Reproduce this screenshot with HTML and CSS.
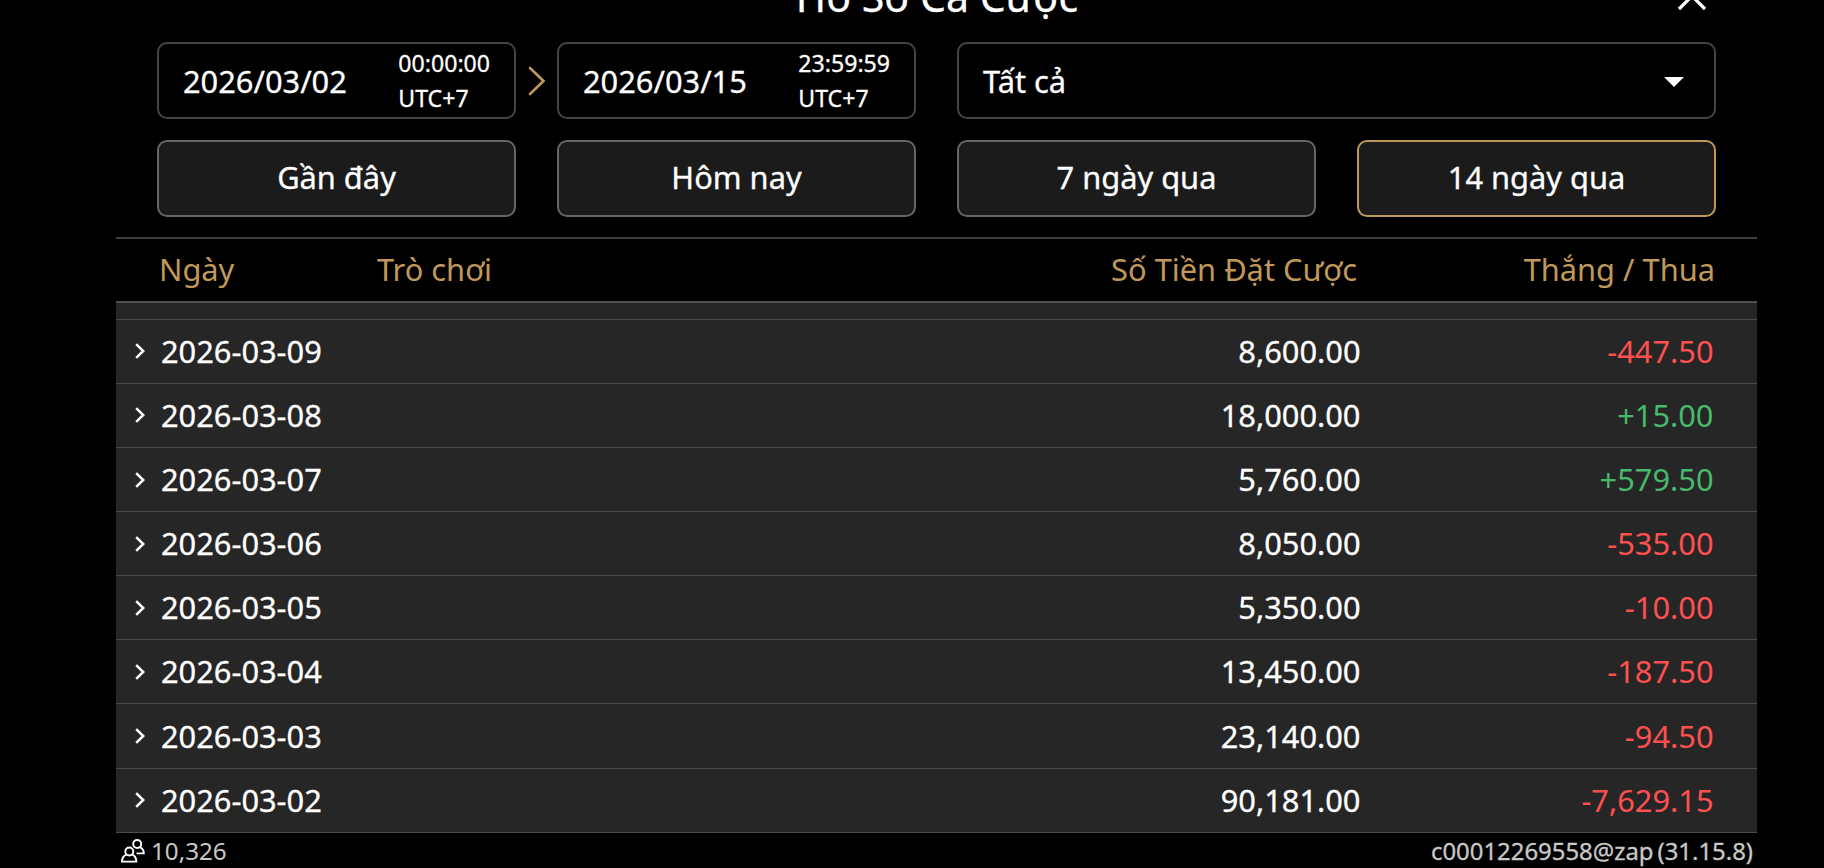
FILE: index.html
```
<!DOCTYPE html>
<html lang="vi">
<head>
    <meta charset="UTF-8">
    <meta name="viewport" content="width=device-width, initial-scale=1.0">
    <title>Hồ Sơ Cá Cược</title>
    <link rel="stylesheet" href="styles.css">
</head>
<body>

    <div class="panel">
        <header class="title-bar">
            <h1>Hồ Sơ Cá Cược</h1>
            <svg class="close" viewBox="0 0 30 30"><path d="M2 2 L28 28 M28 2 L2 28"/></svg>
        </header>

        <section class="filters">
            <div class="field date">
                <span>2026/03/02</span>
                <div class="time"><span>00:00:00</span><span>UTC+7</span></div>
                <svg class="range-arrow" viewBox="0 0 18 30"><path d="M2 2 L15.5 15 L2 28"/></svg>
            </div>
            <div class="field date">
                <span>2026/03/15</span>
                <div class="time"><span>23:59:59</span><span>UTC+7</span></div>
            </div>
            <div class="field select">
                <span>Tất cả</span>
                <svg class="caret" viewBox="0 0 20 10"><path d="M0 0 H20 L10 10 Z"/></svg>
            </div>
            <button>Gần đây</button>
            <button>Hôm nay</button>
            <button>7 ngày qua</button>
            <button class="active">14 ngày qua</button>
        </section>

        <div class="table-head">
            <span>Ngày</span>
            <span>Trò chơi</span>
            <span class="num">Số Tiền Đặt Cược</span>
            <span class="num">Thắng / Thua</span>
        </div>

        <main class="rows">
            <div class="row-end"></div>
            <div class="row">
                <svg class="chevron" viewBox="0 0 10 16"><path d="M1.2 1.2 L8.2 8 L1.2 14.8"/></svg>
                <span>2026-03-09</span><span class="num">8,600.00</span><span class="num loss">-447.50</span>
            </div>
            <div class="row">
                <svg class="chevron" viewBox="0 0 10 16"><path d="M1.2 1.2 L8.2 8 L1.2 14.8"/></svg>
                <span>2026-03-08</span><span class="num">18,000.00</span><span class="num win">+15.00</span>
            </div>
            <div class="row">
                <svg class="chevron" viewBox="0 0 10 16"><path d="M1.2 1.2 L8.2 8 L1.2 14.8"/></svg>
                <span>2026-03-07</span><span class="num">5,760.00</span><span class="num win">+579.50</span>
            </div>
            <div class="row">
                <svg class="chevron" viewBox="0 0 10 16"><path d="M1.2 1.2 L8.2 8 L1.2 14.8"/></svg>
                <span>2026-03-06</span><span class="num">8,050.00</span><span class="num loss">-535.00</span>
            </div>
            <div class="row">
                <svg class="chevron" viewBox="0 0 10 16"><path d="M1.2 1.2 L8.2 8 L1.2 14.8"/></svg>
                <span>2026-03-05</span><span class="num">5,350.00</span><span class="num loss">-10.00</span>
            </div>
            <div class="row">
                <svg class="chevron" viewBox="0 0 10 16"><path d="M1.2 1.2 L8.2 8 L1.2 14.8"/></svg>
                <span>2026-03-04</span><span class="num">13,450.00</span><span class="num loss">-187.50</span>
            </div>
            <div class="row">
                <svg class="chevron" viewBox="0 0 10 16"><path d="M1.2 1.2 L8.2 8 L1.2 14.8"/></svg>
                <span>2026-03-03</span><span class="num">23,140.00</span><span class="num loss">-94.50</span>
            </div>
            <div class="row">
                <svg class="chevron" viewBox="0 0 10 16"><path d="M1.2 1.2 L8.2 8 L1.2 14.8"/></svg>
                <span>2026-03-02</span><span class="num">90,181.00</span><span class="num loss">-7,629.15</span>
            </div>
        </main>

        <footer>
            <svg class="users" viewBox="0 0 24 24">
                <circle cx="8.3" cy="12.5" r="4"/>
                <path d="M5.6 15.6 C2.5 16.6 1 18.6 1 22.6 H15.3 C15.3 18.6 14 16.6 11 15.6"/>
                <circle cx="16.2" cy="5" r="4"/>
                <path d="M18.8 8.3 C21.5 9.2 22.8 11 22.8 14.4 H15.5"/>
            </svg>
            <span>10,326</span>
            <span class="account">c00012269558@zap</span>
            <span class="version">(31.15.8)</span>
        </footer>
    </div>

</body>
</html>
```

FILE: styles.css
```
* {
    box-sizing: border-box;
}

body {
    margin: 0;
    height: 868px;
    overflow: hidden;
    background-color: #000;
    color: #fff;
    font-family: 'Noto Sans', sans-serif;
    font-size: 30.8px;
    line-height: 42px;
    -webkit-text-stroke: 0.3px;
}

svg {
    flex: none;
    fill: none;
    stroke: #fff;
}

.panel {
    width: 1641px;
    margin-left: 116px;
}

/* the title is partly scrolled out of the window */
.title-bar {
    display: flex;
    align-items: center;
    height: 84px;
    margin-top: -42px;
    padding-right: 50px;
}

h1 {
    flex: 1;
    margin: 0 0 9px 81px;
    font-size: 41px;
    font-weight: 400;
    text-align: center;
}

.close {
    width: 30px;
    height: 30px;
    margin-bottom: 9px;
    stroke-width: 3.2;
}

.filters {
    display: grid;
    grid-template-columns: repeat(4, 359px);
    grid-auto-rows: 77px;
    gap: 21px 41px;
    padding-left: 41px;
}

.field {
    display: flex;
    align-items: center;
    justify-content: space-between;
    border: 2px solid #444;
    border-radius: 10px;
}

.date {
    position: relative;
    padding: 0 24px;
}

.time {
    display: flex;
    flex-direction: column;
    font-size: 23.1px;
    line-height: 35px;
}

.range-arrow {
    position: absolute;
    left: 369px;
    width: 18px;
    height: 30px;
    stroke: #c0995a;
    stroke-width: 2.6;
    stroke-linecap: round;
}

.select {
    grid-column: span 2;
    padding: 0 30px 0 24px;
}

.caret {
    width: 20px;
    height: 10px;
    margin-top: 2px;
    fill: #fff;
    stroke: none;
}

button {
    padding: 0 0 4px;
    border: 2px solid #666;
    border-radius: 10px;
    background-color: #1b1b1b;
    color: #fff;
    font: inherit;
    -webkit-text-stroke: 0.3px;
}

button.active {
    border-color: #c0995a;
}

.table-head {
    display: grid;
    grid-template-columns: 218px 1fr 400px 358px;
    align-items: center;
    height: 66px;
    margin-top: 20px;
    padding: 0 42px 2px 43px;
    border-top: 2px solid #3e3e3e;
    border-bottom: 2px solid #4f4f4f;
    color: #c0995a;
    -webkit-text-stroke: 0;
}

.num {
    text-align: right;
}

.rows {
    background-color: #262626;
}

.row-end {
    height: 16.7px;
    border-bottom: 1px solid #4b4b4b;
}

.row {
    display: grid;
    grid-template-columns: 26px 1fr 400px 353px;
    align-items: center;
    height: 64.125px;
    padding: 0 43.5px 1px 19px;
    border-bottom: 1px solid #4b4b4b;
}

.chevron {
    width: 10px;
    height: 16px;
    margin-top: 1px;
    stroke-width: 2.5;
}

.loss {
    color: #ff5050;
    -webkit-text-stroke: 0;
}

.win {
    color: #46b96b;
    -webkit-text-stroke: 0;
}

footer {
    display: flex;
    align-items: center;
    height: 36px;
    padding: 0 4px 0 5px;
    color: #c8c8c8;
    font-size: 24.2px;
    -webkit-text-stroke: 0;
}

.users {
    width: 24px;
    height: 24px;
    margin-right: 6px;
    stroke-width: 1.9;
}

.account,
.version {
    font-size: 23.9px;
    -webkit-text-stroke: 0.3px;
}

.account {
    margin: 0 4px 0 auto;
}
```
